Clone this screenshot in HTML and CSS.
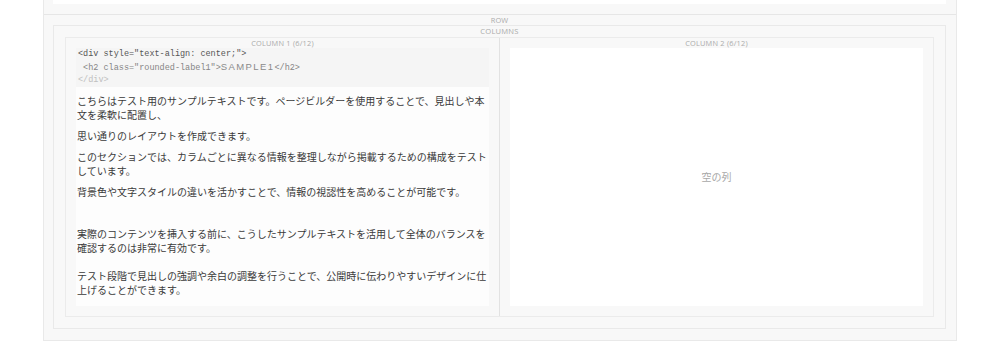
FILE: index.html
```html
<!DOCTYPE html>
<html lang="ja">
<head>
<meta charset="utf-8">
<title>Row</title>
<link rel="stylesheet" href="styles.css">
</head>
<body>
<div class="wrap">
  <div class="prev"><div class="prev-box"></div></div>
  <div class="row">
    <div class="label">ROW</div>
    <div class="columns">
      <div class="label label-cols">COLUMNS</div>
      <div class="colrow">
        <div class="col">
          <div class="label">COLUMN 1 (6/12)</div>
          <div class="content">
            <div class="code"><div class="c1">&lt;div style="text-align: center;"&gt;</div><div class="c2"> &lt;h2 class="rounded-label1"&gt;<span class="sample">SAMPLE1</span>&lt;/h2&gt;</div><div class="c3">&lt;/div&gt;</div></div>
            <p>こちらはテスト用のサンプルテキストです。ページビルダーを使用することで、見出しや本文を柔軟に配置し、</p>
            <p>思い通りのレイアウトを作成できます。</p>
            <p>このセクションでは、カラムごとに異なる情報を整理しながら掲載するための構成をテストしています。</p>
            <p>背景色や文字スタイルの違いを活かすことで、情報の視認性を高めることが可能です。</p>
            <p>&nbsp;</p>
            <p>実際のコンテンツを挿入する前に、こうしたサンプルテキストを活用して全体のバランスを確認するのは非常に有効です。<br><br>テスト段階で見出しの強調や余白の調整を行うことで、公開時に伝わりやすいデザインに仕上げることができます。</p>
          </div>
        </div>
        <div class="col col-right">
          <div class="label">COLUMN 2 (6/12)</div>
          <div class="content empty">
            <span class="empty-text">空の列</span>
          </div>
        </div>
      </div>
    </div>
  </div>
</div>
</body>
</html>
```

FILE: styles.css
```css
html, body {
  margin: 0;
  padding: 0;
  background: #ffffff;
}

body {
  font-family: "Noto Sans CJK JP", "Noto Sans", sans-serif;
}

.wrap {
  margin-left: 43px;
  width: 912px;
  background: #f8f8f8;
  border-left: 1px solid #e9e9e9;
  border-right: 1px solid #e9e9e9;
  border-bottom: 1px solid #e9e9e9;
}

.prev {
  padding: 0 10px 10px 9px;
  border-bottom: 1px solid #e6e6e6;
}

.prev-box {
  height: 4px;
  background: #ffffff;
}

.row {
  padding: 0 10px 11px 9px;
}

.label {
  font-family: "Open Sans", "Liberation Sans", sans-serif;
  font-size: 7.4px;
  line-height: 10px;
  height: 10px;
  text-align: center;
  color: #ababab;
  letter-spacing: 0.2px;
}

.label-cols {
  height: 11px;
  line-height: 11px;
  font-size: 7.6px;
}

.columns {
  border: 1px solid #e9e9e9;
  padding: 0 11px 11px 11px;
}

.colrow {
  display: flex;
  border: 1px solid #ebebeb;
}

.col {
  flex: 1 1 0;
  min-width: 0;
  padding: 0 10px 10px 10px;
  display: flex;
  flex-direction: column;
}

.col-right {
  border-left: 1px solid #e2e2e2;
}

.content {
  flex: 1;
  background: #fdfdfd;
}

.code {
  background: #f5f5f5;
  font-family: "Liberation Mono", "DejaVu Sans Mono", monospace;
  font-size: 8.5px;
  line-height: 12.5px;
  padding: 0 2px;
  white-space: pre;
}

.c1 { color: #555555; }
.c2 { color: #858585; }
.c3 { color: #c0c0c0; }

.sample {
  font-family: "Liberation Sans", "Open Sans", sans-serif;
  font-size: 9.5px;
  letter-spacing: 1.4px;
  color: #8a8a8a;
}

.content p {
  margin: 7px 0 0 1px;
  font-size: 10px;
  line-height: 14px;
  color: #3a3a3a;
}

.content p:last-child {
  margin-bottom: 9px;
}

.empty {
  background: #ffffff;
  display: flex;
  align-items: center;
  justify-content: center;
}

.empty-text {
  font-size: 10px;
  color: #a8a8a8;
}
```
